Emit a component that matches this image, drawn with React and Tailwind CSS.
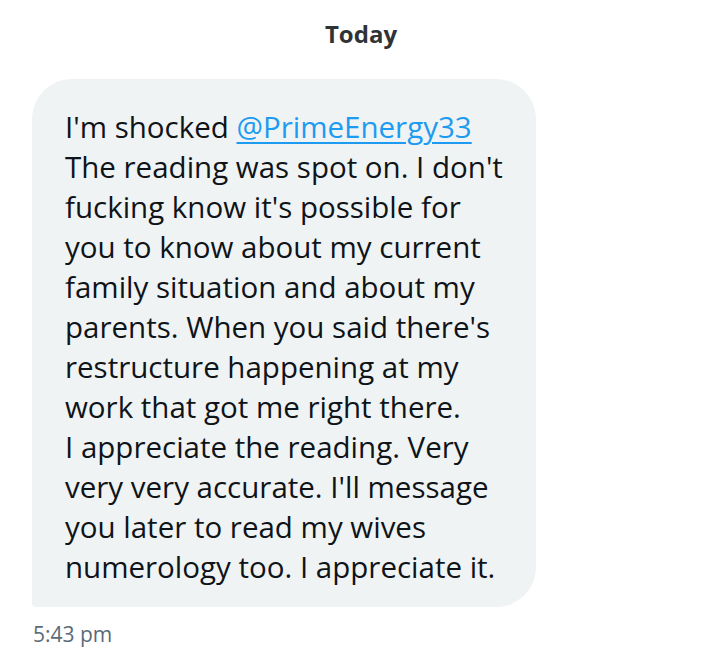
import React from "react";

const lines = [
  "The reading was spot on. I don't",
  "fucking know it's possible for",
  "you to know about my current",
  "family situation and about my",
  "parents. When you said there's",
  "restructure happening at my",
  "work that got me right there.",
  "I appreciate the reading. Very",
  "very very accurate. I'll message",
  "you later to read my wives",
  "numerology too. I appreciate it.",
];

const App = () => {
  return (
    <div className="min-h-screen w-[714px] bg-white font-['Open_Sans',sans-serif]">
      {/* Day separator */}
      <div className="pt-[18px] pb-[29px] pl-[8px] text-center">
        <span className="text-[24px] leading-[32px] font-bold text-[#2f3336]">Today</span>
      </div>

      {/* Message bubble */}
      <div className="pl-[32px]">
        <div className="w-[504px] bg-[#eff3f4] rounded-[40px] rounded-bl-[4px] pl-[33px] pr-[20px] pt-[28px] pb-[20px] text-[#0f1419] text-[29.5px] leading-[40px]">
          <p className="whitespace-nowrap">
            I'm shocked{" "}
            <span className="text-[#1d9bf0] underline underline-offset-[4px] decoration-[2px]">@PrimeEnergy33</span>
          </p>
          {lines.map((line, i) => (
            <p key={i} className="whitespace-nowrap">{line}</p>
          ))}
        </div>
        <p className="mt-[13px] pl-[1px] text-[21px] leading-[28px] text-[#5b6b78]">5:43 pm</p>
      </div>
    </div>
  );
};

export default App;
